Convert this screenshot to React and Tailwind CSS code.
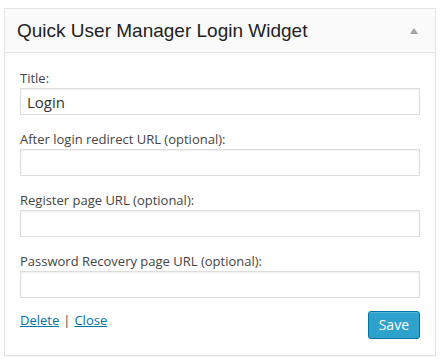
import React from "react";

const fields = [
  { label: "Title:", value: "Login" },
  { label: "After login redirect URL (optional):", value: "" },
  { label: "Register page URL (optional):", value: "" },
  { label: "Password Recovery page URL (optional):", value: "" },
];

export default function App() {
  return (
    <div className="w-[441px] h-[359px] bg-white pl-[4px] pr-[5px] pt-[8px]">
      <div className="border border-[#e5e5e5] bg-white shadow-[0_1px_1px_rgba(0,0,0,0.04)]">
        {/* Header */}
        <div className="h-[44px] bg-[#fafafa] border-b border-[#e5e5e5] flex items-center justify-between pl-[12px] pr-[17px]">
          <h3 className="font-['Liberation_Sans',Arial,sans-serif] text-[19px] text-[#222] leading-none">
            Quick User Manager Login Widget
          </h3>
          <span className="w-0 h-0 border-l-[4px] border-r-[4px] border-b-[6px] border-l-transparent border-r-transparent border-b-[#a0a5aa]" />
        </div>

        {/* Body */}
        <div className="px-[15px] pt-[15px] pb-[16px] font-['Open_Sans',sans-serif]">
          <div className="flex flex-col gap-[14px]">
            {fields.map((f, i) => (
              <div key={i}>
                <label className="block text-[13px] leading-[20px] text-[#444]">
                  {f.label}
                </label>
                <input
                  type="text"
                  defaultValue={f.value}
                  className="block w-full h-[27px] border border-[#ddd] shadow-[inset_0_1px_2px_rgba(0,0,0,0.07)] px-[6px] text-[15px] text-[#333] outline-none"
                />
              </div>
            ))}
          </div>

          <div className="flex items-start justify-between mt-[13px]">
            <div className="text-[13px] leading-[18px] text-[#444]">
              <a href="#" className="text-[#0073aa] underline">Delete</a>
              <span className="mx-[4px]">|</span>
              <a href="#" className="text-[#0073aa] underline">Close</a>
            </div>
            <button className="h-[28px] px-[10px] bg-[#2ea2cc] border border-[#0074a2] rounded-[3px] text-white text-[14px] leading-none shadow-[inset_0_1px_0_rgba(120,200,230,0.5)]">
              Save
            </button>
          </div>
        </div>
      </div>
    </div>
  );
}
